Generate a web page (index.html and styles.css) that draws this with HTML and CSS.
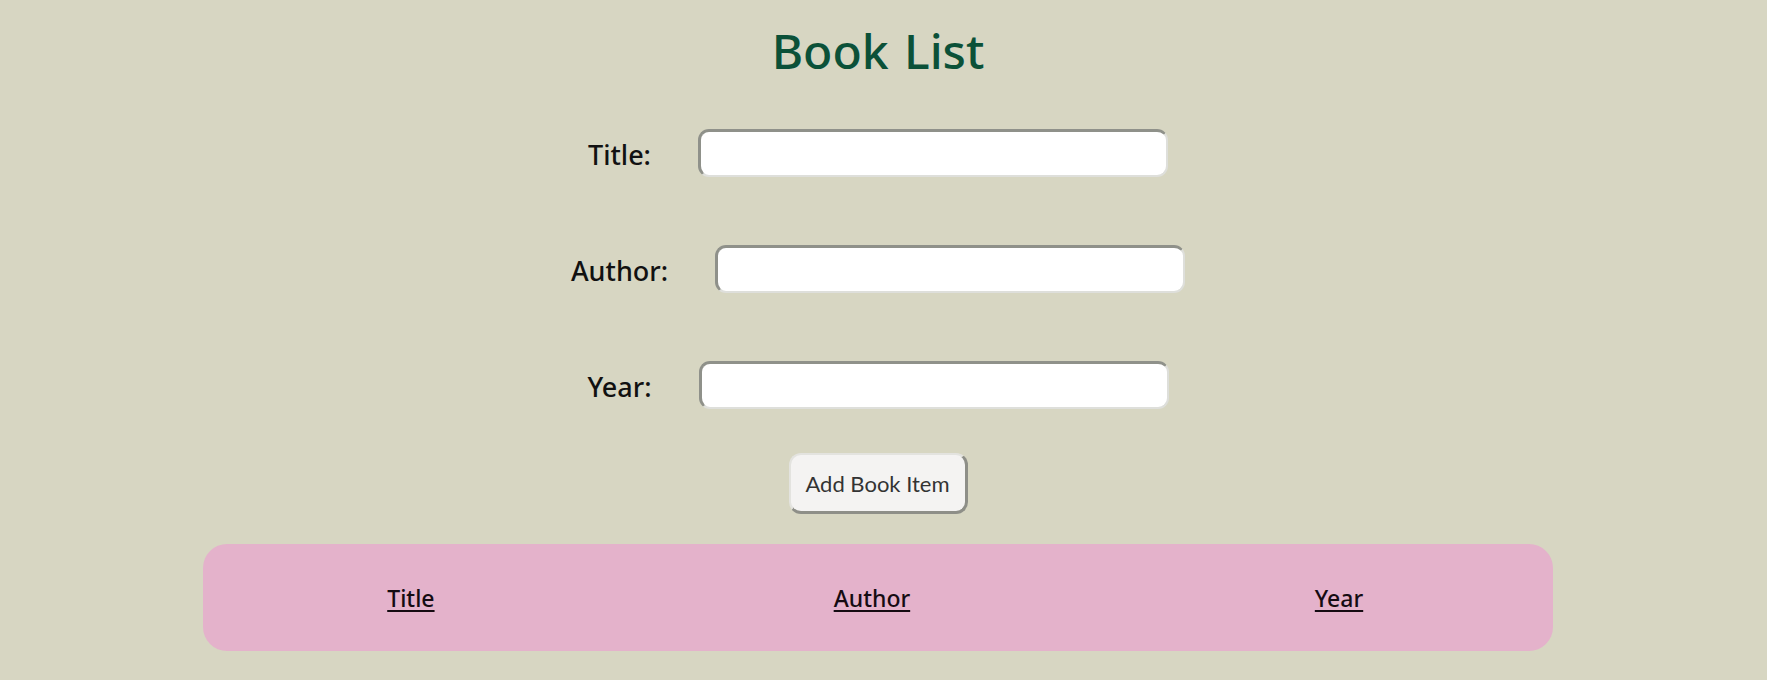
FILE: index.html
```html
<!DOCTYPE html>
<html lang="en">
<head>
<meta charset="utf-8">
<title>Book List</title>
<link rel="stylesheet" href="styles.css">
</head>
<body>
<h1 class="page-title">Book List</h1>
<form class="book-form">
  <div class="field-row">
    <label class="field-label" for="title">Title:</label>
    <input class="field-input" id="title" type="text">
  </div>
  <div class="field-row">
    <label class="field-label" for="author">Author:</label>
    <input class="field-input" id="author" type="text">
  </div>
  <div class="field-row field-row-last">
    <label class="field-label" for="year">Year:</label>
    <input class="field-input" id="year" type="text" autofocus>
  </div>
  <div class="button-row">
    <button class="add-button" type="button">Add Book Item</button>
  </div>
</form>
<table class="book-table">
  <thead>
    <tr>
      <th class="col-title">Title</th>
      <th class="col-author">Author</th>
      <th class="col-year">Year</th>
    </tr>
  </thead>
</table>
</body>
</html>
```

FILE: styles.css
```css
html {
  background: #d7d6c2;
}

body {
  margin: 8px 19px 8px 8px;
  background: #d7d6c2;
  font-family: "Noto Sans", "Open Sans", sans-serif;
  color: #111;
}

.page-title {
  margin: 9px 0 44px;
  text-align: center;
  font-family: "Noto Sans", "Open Sans", sans-serif;
  font-size: 48px;
  font-weight: 500;
  line-height: 68px;
  color: #0b5138;
  word-spacing: 3px;
}

.book-form {
  display: flex;
  flex-direction: column;
  align-items: center;
}

.field-row {
  display: flex;
  align-items: center;
  justify-content: center;
  gap: 47px;
  margin-bottom: 68px;
}

.field-row-last {
  margin-bottom: 44px;
}

.field-label {
  font-family: "Noto Sans", "Open Sans", sans-serif;
  font-size: 27px;
  font-weight: 500;
  color: #111;
  padding-top: 3px;
}

.field-input {
  box-sizing: border-box;
  width: 470px;
  height: 48px;
  padding: 0 14px;
  background: #fff;
  border-style: solid;
  border-width: 3px 2px 2px 3px;
  border-color: #8f918a #dedfdb #dedfdb #8f918a;
  border-radius: 11px;
  font-family: "Noto Sans", sans-serif;
  font-size: 24px;
  color: #111;
  outline: none;
  caret-color: #000;
}

.button-row {
  display: flex;
  justify-content: center;
  margin-bottom: 30px;
}

.add-button {
  box-sizing: border-box;
  width: 179px;
  height: 61px;
  padding: 0 14px;
  background: #f4f3f2;
  border-style: solid;
  border-width: 2px 3px 3px 2px;
  border-color: #e3e3df #8e8f88 #8e8f88 #e3e3df;
  border-radius: 12px;
  font-family: "Lato", sans-serif;
  font-size: 22px;
  color: #333;
}

.book-table {
  width: 1350px;
  height: 107px;
  margin: 0 auto;
  background: #e4b2cb;
  border-radius: 24px;
  border-collapse: separate;
  border-spacing: 0;
}

.book-table th {
  font-family: "Noto Sans", "Open Sans", sans-serif;
  font-size: 23px;
  font-weight: 500;
  color: #150b12;
  text-decoration: underline;
  text-decoration-thickness: 2px;
  text-underline-offset: 3px;
  text-align: center;
  padding: 0;
}

.col-title {
  width: 30.8%;
}

.col-author {
  width: 37.5%;
}

.col-year {
  width: 31.7%;
}
```
